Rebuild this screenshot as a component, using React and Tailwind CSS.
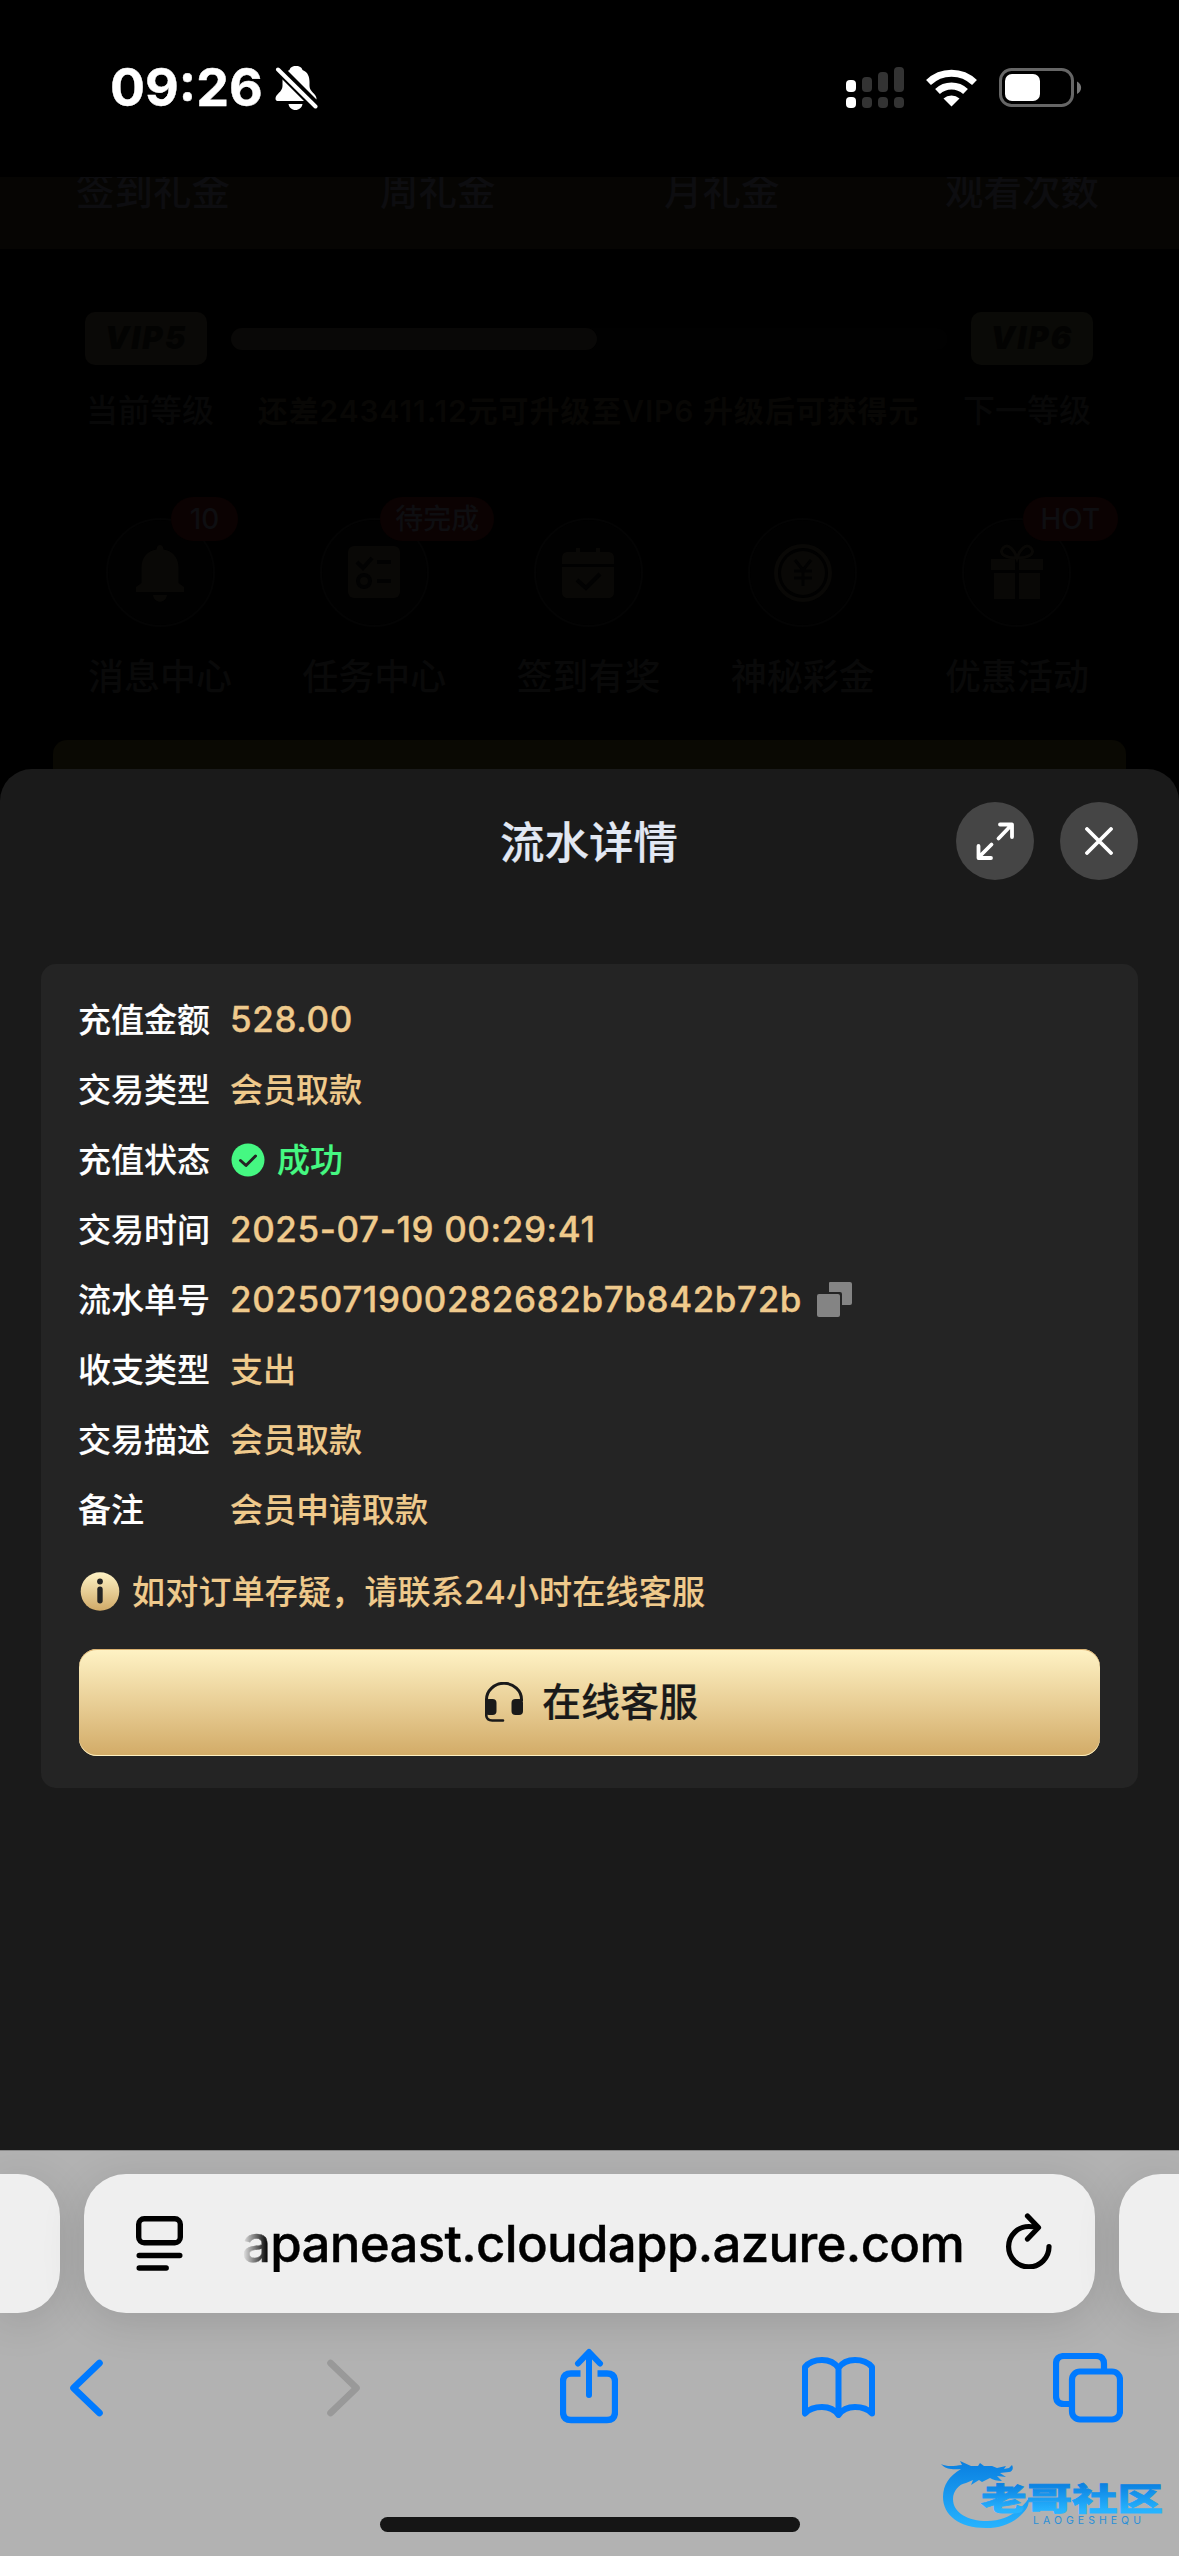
import React from "react";

const vipPerks = [
    {label: "签到礼金", className: "w-[302px] pl-[76px]"},
    {label: "周礼金", className: "w-[268px] pl-[78px]"},
    {label: "月礼金", className: "w-[280px] pl-[94px]"},
    {label: "观看次数", className: "pl-[95px]"},
];

const shortcuts = [
    {label: "消息中心", icon: "bell", badge: "10", badgeClass: "left-[118px] w-[67px]"},
    {label: "任务中心", icon: "task", badge: "待完成", badgeClass: "left-[113px] w-[114px]"},
    {label: "签到有奖", icon: "calendar"},
    {label: "神秘彩金", icon: "coin"},
    {label: "优惠活动", icon: "gift", badge: "HOT", badgeClass: "left-[113px] w-[95px]"},
];

const details = [
    {label: "充值金额", value: "528.00", numeric: true},
    {label: "交易类型", value: "会员取款"},
    {label: "充值状态", value: "成功", status: true},
    {label: "交易时间", value: "2025-07-19 00:29:41", numeric: true},
    {label: "流水单号", value: "2025071900282682b7b842b72b", numeric: true, copy: true},
    {label: "收支类型", value: "支出"},
    {label: "交易描述", value: "会员取款"},
    {label: "备注", value: "会员申请取款"},
];

// --- Status bar ---
const StatusBar = () => (
    <header className="flex h-[177px] items-start bg-black pl-[110px] pt-[58px] text-white">
        <span className="w-[164px] whitespace-nowrap text-[52px] font-bold leading-[60px] [-webkit-text-stroke:0.4px]">
            09:26
        </span>
        <svg className="mt-[7px]" width="44" height="46" viewBox="0 0 44 46" fill="none">
            <path
                fill="#fff"
                d="M22 1c-4 0-6 2-6.500 4C10 7 8.500 12 8.500 17v4c0 6-7 8-7 12.500 0 2 1 2.500 3 2.500h35c2 0 3-1 3-2.500 0-4.500-7-7-7-12.500v-4c0-5-1.500-10-7-12C28 3 26 1 22 1zM14.500 39h14c-.5 3.500-3.500 6-7 6s-6.500-2.500-7-6z"
            />
            <path stroke="#000" strokeWidth="10" strokeLinecap="round" d="M5 4l37 37" />
            <path stroke="#fff" strokeWidth="4" strokeLinecap="round" d="M4 4.500l37.500 37" />
        </svg>
        <svg className="ml-[528px] mt-[9px]" width="58" height="42" viewBox="0 0 58 42">
            <g fill="#333">
                <rect x="16" y="10" width="10" height="15" rx="4" />
                <rect x="32" y="5" width="10" height="20" rx="4" />
                <rect x="48" y="0" width="10" height="25" rx="4" />
                <rect x="16" y="30" width="10" height="11" rx="4" />
                <rect x="32" y="30" width="10" height="11" rx="4" />
                <rect x="48" y="30" width="10" height="11" rx="4" />
            </g>
            <rect x="0" y="13" width="10" height="12" rx="4" fill="#fff" />
            <rect x="0" y="30" width="10" height="11" rx="4" fill="#fff" />
        </svg>
        <svg className="ml-[22px] mt-[11px]" width="52" height="38" viewBox="0 0 52 38" fill="none">
            <path stroke="#fff" strokeWidth="7" d="M2.500 13.500a33 33 0 0 1 46 0" />
            <path stroke="#fff" strokeWidth="7" d="M11.500 22.500a20.500 20.500 0 0 1 28 0" />
            <path fill="#fff" d="M25.500 37.500l-8-8a12 12 0 0 1 16 0z" />
        </svg>
        <svg className="ml-[21px] mt-[10px]" width="83" height="40" viewBox="0 0 83 40" fill="none">
            <rect x="1.500" y="1.500" width="72" height="36" rx="11" stroke="#666" strokeWidth="3" />
            <rect x="6" y="6" width="35" height="27" rx="7" fill="#fff" />
            <path d="M78 13.500c5.500 3 5.500 9.500 0 12.500z" fill="#777" />
        </svg>
    </header>
);

// --- Dimmed member page behind the sheet ---
const ShortcutIcon = ({name}) => (
    <svg width="58" height="66" viewBox="0 0 58 66" fill="#090806">
        {name === "bell" && (
            <path d="M29 5c2 0 3.500 2 3.500 4.500C42 11 47.500 18 47.500 27v16l5.500 4v5H5v-5l5.500-4V27c0-9 5.500-16 15-17.500C25.500 7 27 5 29 5zM22 55h14c-1 9-13 9-14 0z" />
        )}
        {name === "task" && (
            <>
                <rect x="3" y="6" width="52" height="52" rx="6" />
                <g stroke="#020202" strokeWidth="4" fill="none">
                    <path d="M12 22l6 6 9-10M32 22h14M32 41h14" />
                    <circle cx="19" cy="41" r="6" />
                </g>
            </>
        )}
        {name === "calendar" && (
            <>
                <path d="M3 24v-6c0-4 2-6 6-6h8V8h4v4h16V8h4v4h8c4 0 6 2 6 6v6zM3 27h52v25c0 4-2 6-6 6H9c-4 0-6-2-6-6z" />
                <path d="M18 40l9 8 14-14" stroke="#020202" strokeWidth="4" fill="none" />
            </>
        )}
        {name === "coin" && (
            <>
                <circle cx="29" cy="33" r="27" fill="none" stroke="#090806" strokeWidth="4" />
                <circle cx="29" cy="33" r="22" />
                <path d="M21 20l8 10 8-10M29 30v16M20 31h18M20 38h18" stroke="#020202" strokeWidth="3" fill="none" />
            </>
        )}
        {name === "gift" && (
            <>
                <path d="M3 19h24v11H3zM31 19h24v11H31zM6 33h21v26H6zM31 33h21v26H31z" />
                <path
                    d="M29 18C18 18 10 14 15 8s12 3 14 10c2-7 9-16 14-10s-3 10-14 10z"
                    stroke="#090806"
                    strokeWidth="3"
                    fill="none"
                />
            </>
        )}
    </svg>
);

const MemberPage = () => (
    <section className="h-[592px] overflow-hidden bg-black">
        <div className="flex h-[72px] overflow-hidden bg-[#060503] text-[38.500px] font-medium leading-[28px] text-[#0d0d10]">
            {vipPerks.map((perk) => (
                <span key={perk.label} className={perk.className}>
                    {perk.label}
                </span>
            ))}
        </div>

        <div className="flex items-center pl-[85px] pt-[63px]">
            <span className="flex h-[53px] w-[122px] items-center justify-center rounded-[10px] bg-[#0a0907] text-[31px] font-black italic tracking-[2px] text-[#030302]">
                VIP5
            </span>
            <div className="ml-[24px] h-[22px] w-[717px] rounded-full bg-[#010101]">
                <div className="h-full w-[366px] rounded-full bg-[#090807]" />
            </div>
            <span className="ml-[23px] flex h-[53px] w-[122px] items-center justify-center rounded-[10px] bg-[#0a0a07] text-[31px] font-black italic tracking-[2px] text-[#030302]">
                VIP6
            </span>
        </div>
        <div className="mt-[26px] flex items-center justify-between whitespace-nowrap pl-[86px] pr-[88px] text-[32px] font-medium leading-[40px] text-[#080808]">
            <span>当前等级</span>
            <span className="text-[30px] font-semibold tracking-[0.900px] text-[#080705]">
                还差243411.12元可升级至VIP6 升级后可获得元
            </span>
            <span>下一等级</span>
        </div>

        <div className="ml-[53px] mt-[87px] grid w-[1071px] grid-cols-5">
            {shortcuts.map((item) => (
                <div key={item.label} className="relative flex flex-col items-center">
                    <div className="flex size-[109px] items-center justify-center rounded-full border-2 border-[#040404] bg-[#010101]">
                        <ShortcutIcon name={item.icon} />
                    </div>
                    {item.badge && (
                        <span
                            className={`absolute top-[-21px] h-[44px] rounded-full bg-[#0b0202] text-center text-[28px] font-medium leading-[44px] text-[#0e0e11] ${item.badgeClass}`}
                        >
                            {item.badge}
                        </span>
                    )}
                    <span className="mt-[28px] text-[36px] font-medium leading-[44px] text-[#090909]">{item.label}</span>
                </div>
            ))}
        </div>
        <div className="mx-[53px] mt-[41px] h-[80px] rounded-[14px] bg-[#0a0903]" />
    </section>
);

// --- Transaction sheet ---
const DetailRow = ({item}) => (
    <div className="flex h-[70px] items-center whitespace-nowrap text-[33px] font-medium leading-[70px] [-webkit-text-stroke:0.15px]">
        <span className="-ml-px w-[152px] text-white">{item.label}</span>
        {item.status ? (
            <span className="flex items-center text-[#45f882]">
                <svg className="mr-[12px] ml-px" width="34" height="34" viewBox="0 0 34 34">
                    <circle cx="17" cy="17" r="16.500" fill="#45f882" />
                    <path
                        d="M9.500 17.500l5.500 5 9.500-9.500"
                        fill="none"
                        stroke="#242424"
                        strokeWidth="3"
                        strokeLinecap="round"
                        strokeLinejoin="round"
                    />
                </svg>
                {item.value}
            </span>
        ) : item.numeric ? (
            <span className="mb-[2px] text-[35px] tracking-[0.600px] text-[#efca8c] [-webkit-text-stroke:0.35px]">
                {item.value}
            </span>
        ) : (
            <span className="text-[#efca8c]">{item.value}</span>
        )}
        {item.copy && (
            <svg className="mb-[2px] ml-[15px]" width="35" height="35" viewBox="0 0 35 35" fill="#848484">
                <path d="M13 0h20a2 2 0 0 1 2 2v19a2 2 0 0 1-2 2h-8V12a2 2 0 0 0-2-2H12V1a1 1 0 0 1 1-1z" />
                <rect x="0" y="12" width="23" height="23" rx="2" />
            </svg>
        )}
    </div>
);

const TransactionSheet = () => (
    <main className="h-[1381px] rounded-t-[32px] bg-[#1a1a1a]">
        <div className="flex h-[146px] items-center">
            <h1 className="ml-[500px] mt-[2px] w-[456px] whitespace-nowrap text-[44.500px] font-medium leading-[60px] text-[#e2e8f3] [-webkit-text-stroke:0.2px]">
                流水详情
            </h1>
            <button className="mb-[2px] flex size-[78px] items-center justify-center rounded-full bg-[#454545]">
                <svg width="38" height="38" viewBox="0 0 38 38" fill="none" stroke="#fff" strokeWidth="3.800" strokeLinecap="round" strokeLinejoin="round">
                    <path d="M22.500 16.500L35 3.500M24 2.500h12V15M15.500 22.500L3.500 34.500M2.500 24v12H15" />
                </svg>
            </button>
            <button className="mb-[2px] ml-[26px] flex size-[78px] items-center justify-center rounded-full bg-[#454545]">
                <svg className="mb-[1px]" width="28" height="28" viewBox="0 0 28 28" stroke="#fff" strokeWidth="3.800" strokeLinecap="round">
                    <path d="M2 2l24 24M26 2L2 26" />
                </svg>
            </button>
        </div>

        <div className="mx-[41px] mt-[49px] h-[824px] rounded-[15px] bg-[#242424] px-[38px] pt-[21px]">
            {details.map((item) => (
                <DetailRow key={item.label} item={item} />
            ))}

            <div className="flex h-[94px] items-center">
                <svg className="ml-[1px]" width="40" height="40" viewBox="0 0 40 40">
                    <defs>
                        <linearGradient id="infoGold" x1="0" y1="0" x2="0" y2="1">
                            <stop offset="0" stopColor="#fff3c5" />
                            <stop offset="1" stopColor="#d0a967" />
                        </linearGradient>
                    </defs>
                    <circle cx="20" cy="19.500" r="19.300" fill="url(#infoGold)" />
                    <circle cx="20" cy="9.500" r="2.900" fill="#242424" />
                    <rect x="17.300" y="14.500" width="5.400" height="17" rx="2.700" fill="#242424" />
                </svg>
                <p className="ml-[12px] whitespace-nowrap text-[33px] font-medium leading-[50px] tracking-[0.200px] text-[#efca8c] [-webkit-text-stroke:0.15px]">
                    如对订单存疑，请联系24小时在线客服
                </p>
            </div>

            <button className="mt-[10px] flex h-[107px] w-[1021px] items-center rounded-[18px] bg-linear-to-b from-[#fff3c5] to-[#d2ab67] pl-[406px] text-[#1a1a1a] shadow-[inset_0_1px_0_#d9b070,inset_0_-1px_0_#fdf0c0]">
                <svg width="39" height="41" viewBox="0 0 39 41" fill="none">
                    <path d="M1.500 19V17.500a17.500 16.200 0 0 1 35 0V19" stroke="#1a1a1a" strokeWidth="3" />
                    <path d="M1.200 18v14.500q0 6 6 6H18" stroke="#1a1a1a" strokeWidth="2.600" strokeLinecap="round" />
                    <rect x="0" y="17" width="11.500" height="16" rx="4" fill="#1a1a1a" />
                    <rect x="26.500" y="17" width="11.500" height="16" rx="4" fill="#1a1a1a" />
                </svg>
                <span className="ml-[18px] whitespace-nowrap text-[39px] font-medium [-webkit-text-stroke:0.2px]">在线客服</span>
            </button>
        </div>
    </main>
);

// --- Browser bar ---
const BrowserBar = () => (
    <footer className="relative h-[406px] overflow-hidden border-t border-[#8b8b8b] bg-[#b2b2b2]">
        <div className="mt-[23px] flex h-[139px] gap-[24px]">
            <div className="w-[60px] rounded-r-[42px] bg-[#efefef] shadow-[0_8px_44px_rgba(0,0,0,0.13)]" />
            <div className="flex w-[1011px] items-center rounded-[42px] bg-[#efefef] pl-[52px] text-black shadow-[0_8px_44px_rgba(0,0,0,0.13)]">
                <svg width="47" height="55" viewBox="0 0 47 55" fill="none" stroke="#000" strokeWidth="5.400" strokeLinecap="round">
                    <rect x="2.700" y="2.700" width="41.600" height="24" rx="5.500" />
                    <path d="M3.200 39.500h40.600M3.200 52h27" />
                </svg>
                <span className="ml-[59px] w-[723px] whitespace-nowrap text-[51px] font-medium leading-[60px] tracking-[-0.700px] [-webkit-text-stroke:0.4px] [mask-image:linear-gradient(to_right,transparent_0px,black_26px)]">
                    apaneast.cloudapp.azure.com
                </span>
                <svg className="mb-[6px] ml-[41px]" width="46" height="56" viewBox="0 0 46 56" fill="none" stroke="#000" strokeWidth="5.200" strokeLinecap="round" strokeLinejoin="round">
                    <path d="M43 33.500A20.200 20.200 0 1 1 23 13.500c4 0 6 .4 9 1.500M21.500 3L32.500 14.500 21.500 26" />
                </svg>
            </div>
            <div className="w-[60px] rounded-l-[42px] bg-[#efefef] shadow-[0_8px_44px_rgba(0,0,0,0.13)]" />
        </div>

        <nav className="mt-[35px] flex h-[78px] items-center text-[#007aff]">
            <svg className="ml-[69px] mt-[2px]" width="34" height="58" viewBox="0 0 34 58" fill="none" stroke="currentColor" strokeWidth="6.600" strokeLinecap="round" strokeLinejoin="round">
                <path d="M30.500 4L4.500 29l26 25" />
            </svg>
            <svg className="ml-[224px] mt-[2px]" width="34" height="58" viewBox="0 0 34 58" fill="none" stroke="#999" strokeWidth="6.600" strokeLinecap="round" strokeLinejoin="round">
                <path d="M3.500 4l26 25-26 25" />
            </svg>
            <svg className="mb-[2px] ml-[199px]" width="58" height="76" viewBox="0 0 58 76" fill="none" stroke="currentColor" strokeWidth="6.300" strokeLinejoin="round">
                <path d="M20.500 25.500H11q-8 0-8 8V64q0 8 8 8h36q8 0 8-8V33.500q0-8-8-8h-9.500" />
                <path strokeLinecap="round" strokeWidth="6" d="M29 47V5M18 15.500L29 4l11 11.500" />
            </svg>
            <svg className="ml-[184px]" width="73" height="62" viewBox="0 0 73 62" fill="none" stroke="currentColor" strokeWidth="6" strokeLinejoin="round">
                <path d="M3 57.500V11Q9 4 20 4t16.500 8Q42 4 53 4t17 7v46.500Q64 51 53 51t-16.500 8Q31 51 20 51T3 57.500zM36.500 11v47" />
            </svg>
            <svg className="ml-[178px] mt-[1px]" width="70" height="70" viewBox="0 0 70 70" fill="none" stroke="currentColor" strokeWidth="6.200">
                <path d="M16 51h-5q-8 0-8-8V11q0-8 8-8h32q8 0 8 8v5" />
                <rect x="19" y="18.500" width="48" height="48" rx="8" />
            </svg>
        </nav>

        <div className="ml-[380px] mt-[91px] h-[15px] w-[420px] rounded-full bg-[#151515]" />

        {/* community watermark floats over the bar */}
        <svg className="absolute left-[936px] top-[302px]" width="236" height="80" viewBox="0 0 236 80">
            <defs>
                <linearGradient id="dragonBlue" gradientUnits="userSpaceOnUse" x1="0" y1="8" x2="0" y2="76">
                    <stop offset="0" stopColor="#0a7fe0" />
                    <stop offset="1" stopColor="#27b4ff" />
                </linearGradient>
                <linearGradient id="wordBlue" gradientUnits="userSpaceOnUse" x1="0" y1="30" x2="0" y2="58">
                    <stop offset="0" stopColor="#0a7fe0" />
                    <stop offset="1" stopColor="#27b4ff" />
                </linearGradient>
            </defs>
            <path
                fill="url(#dragonBlue)"
                d="M5 11c6 3 13 2 21 1l-2-4 11 5 7 0 2-3 4 3 8 0 5 2 9-2-2 3 5-1 3-3c2 4 0 7-3 7l-9 1 6 4-9-1 5 5c-5 0-9-1-12-3l-8 4-3-2-8 5 2-5-7 3C23 31 17 38 17 46c0 14 15 22 34 22 19 0 32-9 42-23 0 9-3 12-8 17-9 9-21 13-35 13C23 75 7 62 7 44c0-12 6-21 18-28-8 1-16 0-20-5z"
            />
            <text
                x="45"
                y="57"
                textLength="182"
                lengthAdjust="spacingAndGlyphs"
                fill="url(#wordBlue)"
                stroke="url(#wordBlue)"
                strokeWidth="0.800"
                className="text-[31px] font-black"
            >
                老哥社区
            </text>
            <text x="97" y="71" textLength="108" fill="#2a8fd8" className="text-[10.500px]">
                LAOGESHEQU
            </text>
        </svg>
    </footer>
);

const App = () => {
    return (
        <div className="h-[2556px] w-[1179px] overflow-hidden bg-black font-['Inter','Noto_Sans_CJK_SC',sans-serif]">
            <StatusBar />
            <MemberPage />
            <TransactionSheet />
            <BrowserBar />
        </div>
    );
};

export default App;
